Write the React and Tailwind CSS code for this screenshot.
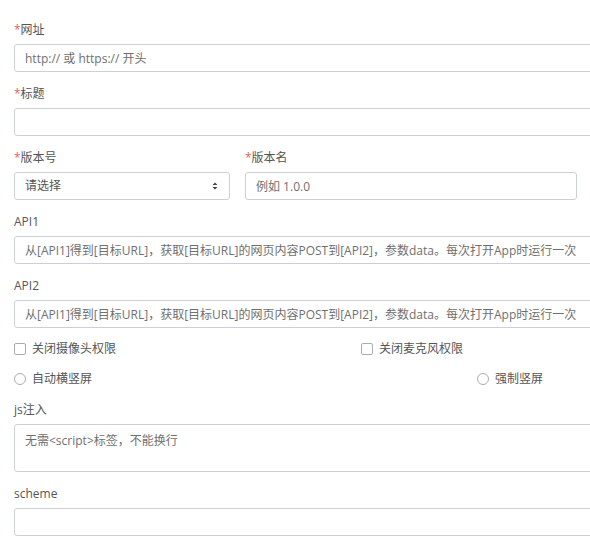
import React from 'react';

const font = { fontFamily: '"Open Sans", "Noto Sans CJK SC", sans-serif' };

const inputCls =
  'block h-[28px] rounded-[3px] border border-[#ccd0d6] bg-white px-[10px] text-[12px] text-[#555] placeholder:text-[#6f6f6f] outline-none';

const Label = ({ children, required }) => (
  <div className="mb-1 h-5 text-[12px] leading-5 text-[#555]">
    {required && <span className="text-[#e86060]">*</span>}
    {children}
  </div>
);

const CheckItem = ({ label, radio }) => (
  <label className="flex items-center gap-[6px] text-[12px] text-[#555]">
    <span
      className={`block h-[12px] w-[12px] border border-[#a9adb3] bg-white ${radio ? 'rounded-full' : 'rounded-[2px]'}`}
    />
    {label}
  </label>
);

const apiHint = '从[API1]得到[目标URL]，获取[目标URL]的网页内容POST到[API2]，参数data。每次打开App时运行一次';

export default function App() {
  return (
    <div className="w-[590px] h-[548px] overflow-hidden bg-white" style={font}>
      <div className="w-[640px] pl-[14px] pt-5">
        <div className="mb-3">
          <Label required>网址</Label>
          <input className={`${inputCls} w-full`} placeholder="http:// 或 https:// 开头" />
        </div>
        <div className="mb-3">
          <Label required>标题</Label>
          <input className={`${inputCls} w-full`} />
        </div>
        <div className="mb-3 flex gap-[15px]">
          <div className="w-[216px]">
            <Label required>版本号</Label>
            <div className={`${inputCls} flex items-center justify-between w-full`}>
              <span>请选择</span>
              <svg width="6" height="8" viewBox="0 0 6 8" className="mr-[1px]">
                <path d="M3 0.5 L5.5 3 H0.5 Z M3 7.5 L5.5 5 H0.5 Z" fill="#444" />
              </svg>
            </div>
          </div>
          <div className="w-[332px]">
            <Label required>版本名</Label>
            <input className={`${inputCls} w-full`} placeholder="例如 1.0.0" />
          </div>
        </div>
        <div className="mb-3">
          <Label>API1</Label>
          <input className={`${inputCls} w-full`} placeholder={apiHint} />
        </div>
        <div>
          <Label>API2</Label>
          <input className={`${inputCls} w-full`} placeholder={apiHint} />
        </div>
        <div className="mt-3 flex h-[18px] items-center">
          <div className="w-[347px]">
            <CheckItem label="关闭摄像头权限" />
          </div>
          <CheckItem label="关闭麦克风权限" />
        </div>
        <div className="mt-3 flex h-[18px] items-center">
          <div className="w-[463px]">
            <CheckItem radio label="自动横竖屏" />
          </div>
          <CheckItem radio label="强制竖屏" />
        </div>
        <div className="mb-3 mt-3">
          <Label>js注入</Label>
          <textarea
            className="block h-[48px] w-full resize-none rounded-[3px] border border-[#ccd0d6] bg-white px-[10px] py-[6px] text-[12px] leading-5 text-[#555] placeholder:text-[#6f6f6f] outline-none"
            placeholder="无需<script>标签，不能换行"
          />
        </div>
        <div>
          <Label>scheme</Label>
          <input className={`${inputCls} w-full`} />
        </div>
      </div>
    </div>
  );
}
